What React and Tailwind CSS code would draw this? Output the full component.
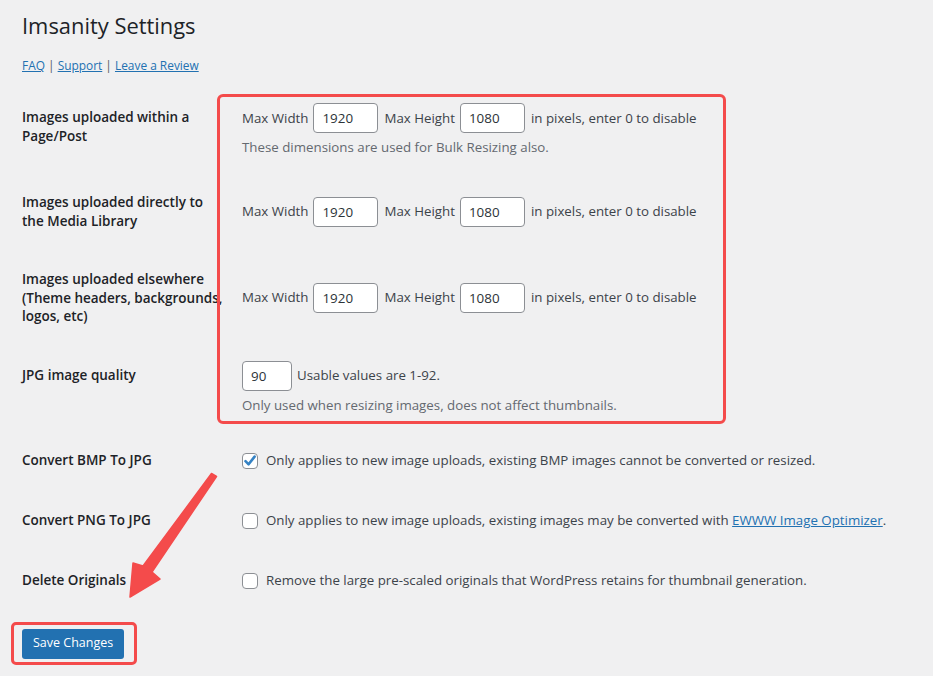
const FONT = "font-['Open_Sans','Noto_Sans',sans-serif]";

function NumInput({ value, w = 'w-[65px]' }) {
  return (
    <input
      readOnly
      value={value}
      className={`${w} h-[30px] rounded-[4px] border border-[#8c8f94] bg-white px-[8px] text-[13.4px] text-[#2c3338] outline-none`}
    />
  );
}

function Row({ label, children }) {
  return (
    <div className="flex items-center">
      <div className="w-[210px] shrink-0 self-start py-[20px] pr-[10px] text-[13.5px] font-semibold leading-[18.5px] text-[#1d2327] whitespace-nowrap">
        {label}
      </div>
      <div className="flex-1 px-[10px] py-[15px] text-[13.3px] leading-[19px] text-[#3c434a]">{children}</div>
    </div>
  );
}

function SizeFields() {
  return (
    <div className="flex items-center gap-[5px]">
      <span>Max Width</span>
      <NumInput value="1920" />
      <span className="ml-[1px]">Max Height</span>
      <NumInput value="1080" />
      <span className="ml-[1px]">in pixels, enter 0 to disable</span>
    </div>
  );
}

function Checkbox({ checked }) {
  return (
    <span className="flex h-[16px] w-[16px] shrink-0 items-center justify-center rounded-[4px] border border-[#8c8f94] bg-white">
      {checked && (
        <svg width="14" height="14" viewBox="0 0 14 14">
          <path d="M2.5 7.2 L5.6 10.3 L11.6 2.6" fill="none" stroke="#3582c4" strokeWidth="2.6" strokeLinecap="round" strokeLinejoin="round" />
        </svg>
      )}
    </span>
  );
}

function CheckLine({ checked, children }) {
  return (
    <div className="flex h-[30px] items-center gap-[8px]">
      <Checkbox checked={checked} />
      <span>{children}</span>
    </div>
  );
}

export default function App() {
  return (
    <div className={`relative min-h-[676px] overflow-hidden bg-[#f0f0f1] pl-[22px] ${FONT} text-[#1d2327]`}>
      <h1 className="pt-[11px] text-[21.9px] font-normal leading-[29px]">Imsanity Settings</h1>
      <p className="mt-[15px] text-[11.9px] leading-[20px] text-[#50575e]">
        <a className="text-[#2271b1] underline">FAQ</a> | <a className="text-[#2271b1] underline">Support</a> |{' '}
        <a className="text-[#2271b1] underline">Leave a Review</a>
      </p>

      <div className="mt-[13px]">
        <Row label={<>Images uploaded within a<br />Page/Post</>}>
          <SizeFields />
          <p className="mt-[4px] leading-[21px] text-[#646970]">These dimensions are used for Bulk Resizing also.</p>
        </Row>
        <Row label={<>Images uploaded directly to<br />the Media Library</>}>
          <SizeFields />
        </Row>
        <Row label={<>Images uploaded elsewhere<br />(Theme headers, backgrounds,<br />logos, etc)</>}>
          <SizeFields />
        </Row>
        <Row label="JPG image quality">
          <div className="flex items-center gap-[5px]">
            <NumInput value="90" w="w-[50px]" />
            <span>Usable values are 1-92.</span>
          </div>
          <p className="mt-[4px] leading-[21px] text-[#646970]">Only used when resizing images, does not affect thumbnails.</p>
        </Row>
        <Row label="Convert BMP To JPG">
          <CheckLine checked>
            Only applies to new image uploads, existing BMP images cannot be converted or resized.
          </CheckLine>
        </Row>
        <Row label="Convert PNG To JPG">
          <CheckLine>
            Only applies to new image uploads, existing images may be converted with{' '}
            <a className="text-[#2271b1] underline">EWWW Image Optimizer</a>.
          </CheckLine>
        </Row>
        <Row label="Delete Originals">
          <CheckLine>Remove the large pre-scaled originals that WordPress retains for thumbnail generation.</CheckLine>
        </Row>
      </div>

      <div className="pt-[18px]">
        <button className="h-[30px] rounded-[3px] bg-[#2271b1] px-[11px] text-[12.5px] text-white">Save Changes</button>
      </div>

      {/* annotations */}
      <div className="absolute left-[217px] top-[94px] h-[330px] w-[509px] rounded-[6px] border-[3px] border-[#f44b4b]" />
      <div className="absolute left-[11px] top-[622px] h-[43px] w-[126px] rounded-[5px] border-[3px] border-[#f44b4b]" />
      <svg className="absolute left-0 top-0" width="933" height="676">
        <polygon
          points="211.5,473.5 216.5,476.5 152,572 160,579 130,597 133,563 143,566"
          fill="#f44b4b"
          stroke="#f44b4b"
          strokeWidth="1.5"
          strokeLinejoin="round"
        />
      </svg>
    </div>
  );
}
